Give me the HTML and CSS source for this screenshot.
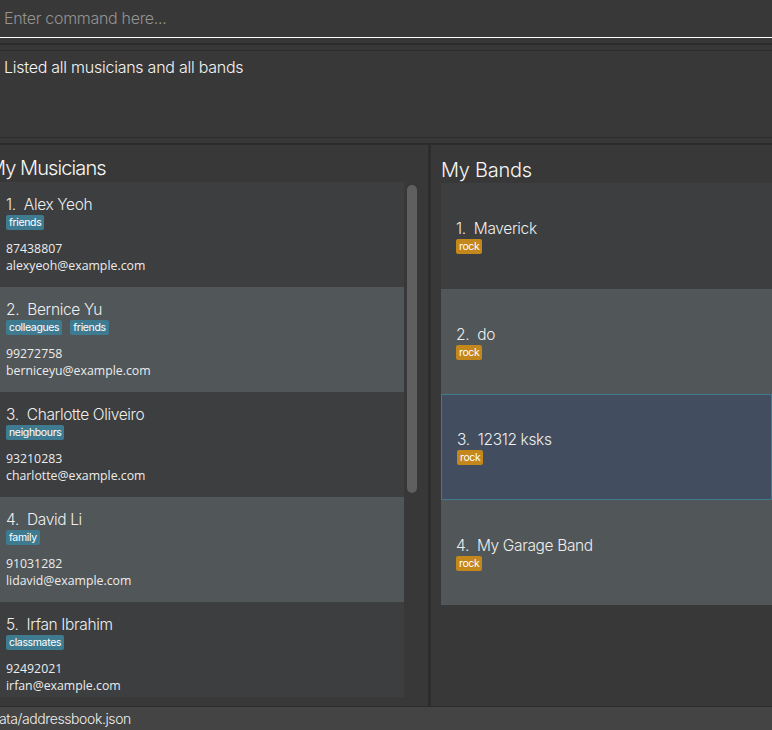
FILE: index.html
```html
<!DOCTYPE html>
<html>
<head>
<meta charset="utf-8">
<link rel="stylesheet" href="styles.css">
</head>
<body>
<div class="app">
  <div class="command"><span class="placeholder">Enter command here...</span></div>
  <div class="gap"></div>
  <div class="result">Listed all musicians and all bands</div>
  <div class="gap2"></div>
  <div class="panels">
    <section class="panel left">
      <h2 class="title title-left">My Musicians</h2>
      <div class="list-wrap">
        <div class="list">
          <div class="card odd">
            <div class="name">1.&nbsp; Alex Yeoh</div>
            <div class="tags"><span class="tag">friends</span></div>
            <div class="detail">87438807</div>
            <div class="detail">alexyeoh@example.com</div>
          </div>
          <div class="card even">
            <div class="name">2.&nbsp; Bernice Yu</div>
            <div class="tags"><span class="tag">colleagues</span><span class="tag">friends</span></div>
            <div class="detail">99272758</div>
            <div class="detail">berniceyu@example.com</div>
          </div>
          <div class="card odd">
            <div class="name">3.&nbsp; Charlotte Oliveiro</div>
            <div class="tags"><span class="tag">neighbours</span></div>
            <div class="detail">93210283</div>
            <div class="detail">charlotte@example.com</div>
          </div>
          <div class="card even">
            <div class="name">4.&nbsp; David Li</div>
            <div class="tags"><span class="tag">family</span></div>
            <div class="detail">91031282</div>
            <div class="detail">lidavid@example.com</div>
          </div>
          <div class="card odd">
            <div class="name">5.&nbsp; Irfan Ibrahim</div>
            <div class="tags"><span class="tag">classmates</span></div>
            <div class="detail">92492021</div>
            <div class="detail">irfan@example.com</div>
          </div>
        </div>
        <div class="scrolltrack"><div class="thumb"></div></div>
      </div>
    </section>
    <div class="vdivider"></div>
    <section class="panel right">
      <h2 class="title title-right">My Bands</h2>
      <div class="bands">
        <div class="band odd">
          <div class="name">1.&nbsp; Maverick</div>
          <div class="tags"><span class="tag rock">rock</span></div>
        </div>
        <div class="band even">
          <div class="name">2.&nbsp; do</div>
          <div class="tags"><span class="tag rock">rock</span></div>
        </div>
        <div class="band selected">
          <div class="name">3.&nbsp; 12312 ksks</div>
          <div class="tags"><span class="tag rock">rock</span></div>
        </div>
        <div class="band even">
          <div class="name">4.&nbsp; My Garage Band</div>
          <div class="tags"><span class="tag rock">rock</span></div>
        </div>
      </div>
    </section>
  </div>
  <div class="status"><span class="status-text">data/addressbook.json</span></div>
</div>
</body>
</html>
```
FILE: styles.css
```css
* { box-sizing: border-box; }
html, body { margin: 0; padding: 0; }
body {
  width: 772px;
  height: 730px;
  overflow: hidden;
  background: #383838;
  font-family: Inter, "Open Sans", sans-serif;
  font-weight: 300;
  letter-spacing: -0.25px;
  color: #ffffff;
}
.app {
  display: flex;
  flex-direction: column;
  height: 730px;
}
.command {
  height: 38px;
  padding-left: 4px;
  display: flex;
  align-items: center;
  border-bottom: 1px solid #ffffff;
  background: #383838;
  flex: none;
}
.placeholder {
  font-size: 16px;
  color: #939393;
  letter-spacing: -0.3px;
  padding-bottom: 1px;
}
.gap {
  height: 13px;
  flex: none;
  border-top: 5px solid #383838;
  background: #383838;
  box-shadow: inset 0 2px 0 #2c2c2c, inset 0 -1px 0 #2c2c2c;
}
.result {
  height: 86px;
  flex: none;
  padding: 6px 4px 0;
  font-size: 16px;
  line-height: 20px;
  color: #f4f4f4;
  background: #383838;
}
.gap2 {
  height: 8px;
  flex: none;
  background: #383838;
  box-shadow: inset 0 1px 0 #2c2c2c, inset 0 -2px 0 #2c2c2c;
}
.panels {
  flex: 1;
  display: flex;
  min-height: 0;
}
.panel {
  display: flex;
  flex-direction: column;
  min-height: 0;
  overflow: hidden;
}
.left { width: 428px; flex: none; }
.vdivider { width: 3px; flex: none; background: #2c2c2c; }
.right { flex: 1; padding-left: 10px; }
.title {
  margin: 0;
  font-size: 20px;
  font-weight: 300;
  line-height: 24px;
  color: #f6f6f6;
  white-space: nowrap;
}
.title-left { padding-top: 11px; height: 37px; margin-left: -12px; letter-spacing: -0.9px; }
.title-right { padding-top: 13px; height: 38px; margin-left: 0; }
.list-wrap {
  display: flex;
  flex: 1;
  min-height: 0;
  padding-bottom: 9px;
}
.list {
  width: 404px;
  flex: none;
  overflow: hidden;
}
.scrolltrack {
  width: 16px;
  flex: none;
  padding: 3px 3px 0;
}
.thumb {
  width: 10px;
  height: 308px;
  border-radius: 5px;
  background: #5f5f5f;
}
.card {
  height: 105px;
  padding: 13px 6px 0;
}
.odd { background: #3c3e3f; }
.even { background: #515658; }
.name {
  font-size: 15.5px;
  line-height: 20px;
  letter-spacing: -0.35px;
  color: #eeeeee;
  white-space: nowrap;
}
.tags {
  display: flex;
  gap: 8px;
  height: 15px;
}
.tag {
  display: inline-block;
  height: 15px;
  line-height: 15px;
  padding: 0 3px;
  font-size: 10.5px;
  font-weight: 400;
  letter-spacing: -0.35px;
  border-radius: 2px;
  background: #3e7b91;
  color: #ffffff;
}
.tag.rock { background: #c3871b; }
.tags + .detail { margin-top: 10px; }
.detail {
  font-family: "Open Sans", sans-serif;
  font-weight: 400;
  letter-spacing: 0;
  font-size: 12.3px;
  line-height: 17px;
  color: #ececec;
}
.bands { display: flex; flex-direction: column; }
.band {
  height: 105.5px;
  padding: 0 15px;
  display: flex;
  flex-direction: column;
  justify-content: center;
}
.band .name { margin-top: 2px; }
.band.selected {
  background: #424d5f;
  border: 1px solid #3e7b91;
  padding-left: 15px;
}
.status {
  height: 24px;
  flex: none;
  background: #444444;
  border-top: 1px solid #2c2c2c;
  overflow: hidden;
  display: flex;
  align-items: center;
}
.status-text {
  font-size: 14px;
  color: #efefef;
  letter-spacing: -0.4px;
  margin-left: -9px;
  white-space: nowrap;
}
```
